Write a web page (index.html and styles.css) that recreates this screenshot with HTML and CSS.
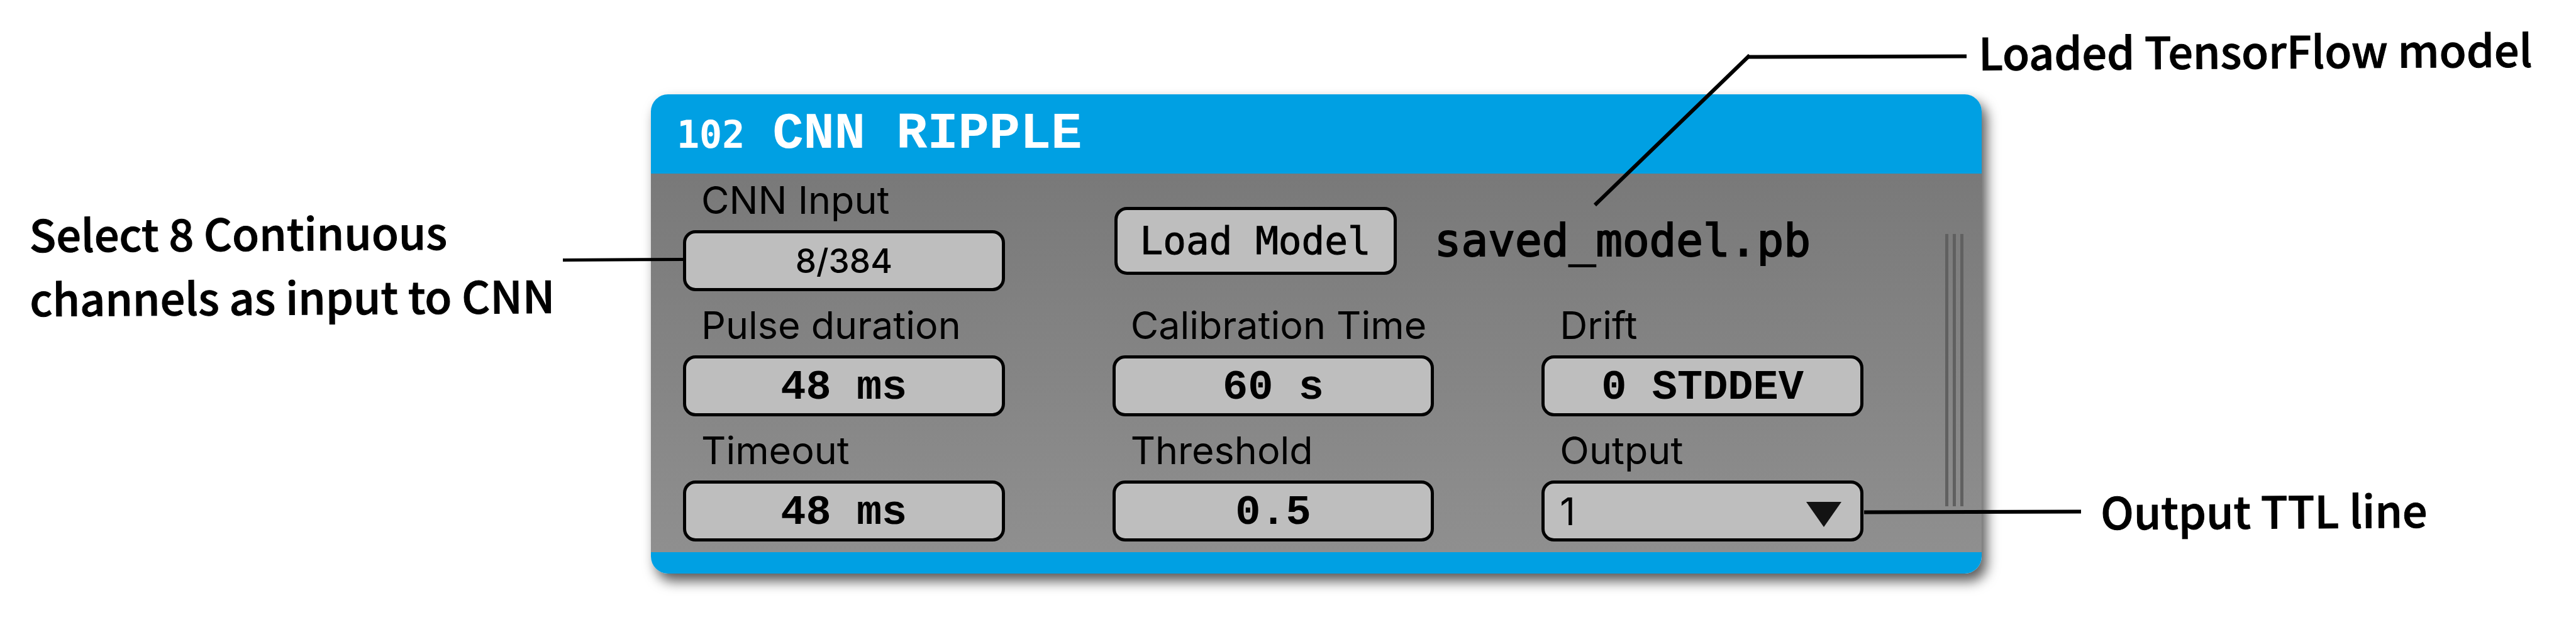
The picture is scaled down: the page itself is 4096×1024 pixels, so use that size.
FILE: index.html
```html
<!DOCTYPE html>
<html lang="en">
<head>
<meta charset="utf-8">
<title>CNN Ripple editor</title>
<link rel="stylesheet" href="styles.css">
</head>
<body>
<main class="figure">
  <p class="note note-input">Select 8 Continuous<br>channels as input to CNN</p>

  <section class="panel">
    <header class="panel-header">
      <span class="node-id">102</span>
      <h1 class="node-name">CNN RIPPLE</h1>
    </header>
    <div class="panel-body">
      <form class="fields">
        <div class="field">
          <label class="label" for="channels">CNN Input</label>
          <button class="box channels" id="channels" type="button">8/384</button>
        </div>
        <div class="loader">
          <button class="load" type="button">Load Model</button>
          <span class="file">saved_model.pb</span>
        </div>
        <div class="field">
          <label class="label" for="pulse">Pulse duration</label>
          <input class="box value" id="pulse" type="text" value="48 ms">
        </div>
        <div class="field">
          <label class="label" for="calibration">Calibration Time</label>
          <input class="box value" id="calibration" type="text" value="60 s">
        </div>
        <div class="field">
          <label class="label" for="drift">Drift</label>
          <input class="box value" id="drift" type="text" value="0 STDDEV">
        </div>
        <div class="field">
          <label class="label" for="timeout">Timeout</label>
          <input class="box value" id="timeout" type="text" value="48 ms">
        </div>
        <div class="field">
          <label class="label" for="threshold">Threshold</label>
          <input class="box value" id="threshold" type="text" value="0.5">
        </div>
        <div class="field">
          <label class="label" for="output">Output</label>
          <div class="picker">
            <select class="box output" id="output"><option>1</option></select>
            <svg class="arrow" viewBox="0 0 56 40" aria-hidden="true"><path d="M0 0H56L28 40Z"/></svg>
          </div>
        </div>
      </form>
      <div class="grip"><i></i><i></i><i></i></div>
    </div>
    <footer class="panel-footer"></footer>
  </section>

  <div class="notes">
    <p class="note">Loaded TensorFlow model</p>
    <p class="note note-output">Output TTL line</p>
  </div>

  <svg class="leaders" viewBox="0 0 4096 1024" aria-hidden="true">
    <path d="M895 413.5L1088 412.5" stroke-width="5"/>
    <path d="M3127 89.5L2780 90.5" stroke-width="6"/>
    <path d="M2782 88L2536 326" stroke-width="6"/>
    <path d="M2964 814.5L3309 813.5" stroke-width="6"/>
  </svg>
</main>
</body>
</html>
```
FILE: styles.css
```css
* {
  box-sizing: border-box;
}

body {
  margin: 0;
  background: #fff;
  color: #000;
  font-family: Inter, sans-serif;
}

.figure {
  position: relative;
  display: grid;
  grid-template-columns: 1035fr 2116fr 945fr;
  align-items: start;
  min-height: 100vh;
}

.note {
  margin: 0;
  font: 500 70px/102px "Noto Sans CJK SC", sans-serif;
  white-space: nowrap;
  -webkit-text-stroke: 1px #000;
  transform: rotate(-0.35deg);
}

.note-input {
  padding: 317px 0 0 46px;
}

.notes {
  display: flex;
  flex-direction: column;
  align-items: flex-start;
  gap: 630px;
  margin-left: -5px;
  padding-top: 28px;
}

.note-output {
  padding-left: 194px;
}

.panel {
  margin-top: 150px;
  border-radius: 27px;
  overflow: hidden;
  box-shadow: 8px 12px 20px rgba(0, 0, 0, 0.65);
}

.panel-header {
  display: flex;
  align-items: baseline;
  gap: 44px;
  height: 126px;
  padding: 16px 41px 0;
  background: #00a0e3;
  color: #fff;
}

.node-id {
  font: bold 60px/96px "DejaVu Sans Mono", monospace;
}

.node-name {
  margin: 0;
  font: bold 82px/96px "Liberation Mono", monospace;
}

.panel-body {
  display: flex;
  gap: 130px;
  padding: 14px 29px 17px 51px;
  background: linear-gradient(#797979, #8f8f8f);
}

.fields {
  flex: 1;
  display: grid;
  grid-template-columns: repeat(3, 1fr);
  gap: 26px 171px;
}

.field {
  display: flex;
  flex-direction: column;
  gap: 19px;
}

.label {
  padding-left: 29px;
  font-size: 61px;
  line-height: 57px;
}

.box,
.load {
  border: 5px solid #000;
  border-radius: 20px;
  background: #bebebe;
  color: #000;
}

.box {
  width: 100%;
  height: 97px;
  padding: 0;
  text-align: center;
}

.value {
  padding-top: 5px;
  font: bold 67px/80px "Liberation Mono", monospace;
}

.channels {
  font: 500 53px/80px Inter, sans-serif;
}

.loader {
  grid-column: span 2;
  display: flex;
  align-items: center;
  align-self: start;
  gap: 60px;
  padding: 39px 0 0 3px;
}

.load {
  width: 449px;
  height: 108px;
  padding: 0;
  font: 61px/90px "DejaVu Sans Mono", monospace;
  -webkit-text-stroke: 1px #000;
}

.file {
  font: 71px/90px "DejaVu Sans Mono", monospace;
  -webkit-text-stroke: 2px #000;
}

.picker {
  position: relative;
}

.output {
  display: block;
  appearance: none;
  padding-left: 24px;
  font: 61px/80px Inter, sans-serif;
  text-align: left;
}

.arrow {
  position: absolute;
  top: 34px;
  right: 35px;
  width: 56px;
  height: 40px;
  fill: #131313;
  pointer-events: none;
}

.grip {
  display: flex;
  gap: 7px;
  margin: 82px 0 56px;
}

.grip i {
  width: 5px;
  background: #606060;
}

.panel-footer {
  height: 34px;
  background: #00a0e3;
}

.leaders {
  position: absolute;
  inset: 0;
  width: 100%;
  fill: none;
  stroke: #000;
  pointer-events: none;
}
```
